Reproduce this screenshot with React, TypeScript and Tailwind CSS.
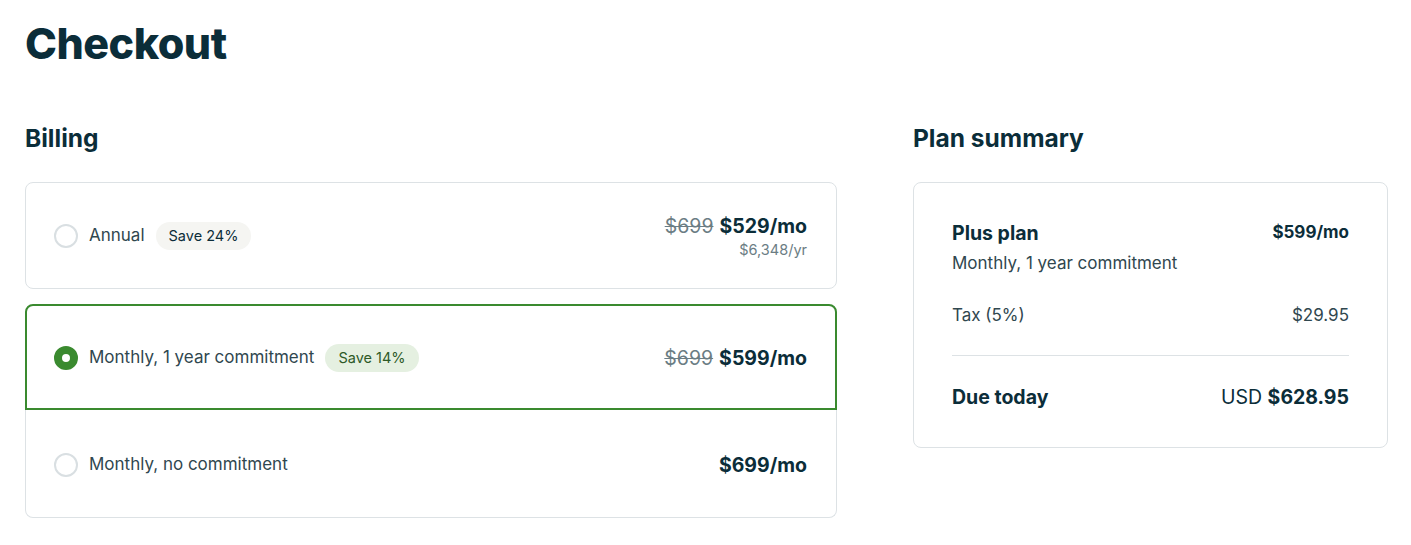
import React from "react";

const ink = "text-[#0b2d39]";

function Radio({ checked }: { checked?: boolean }) {
  if (checked) {
    return (
      <span className="h-6 w-6 shrink-0 rounded-full border-[8px] border-[#3a8a2f] bg-white" />
    );
  }
  return (
    <span className="h-6 w-6 shrink-0 rounded-full border-2 border-[#d9dfe2] bg-white" />
  );
}

function Badge({ children, green }: { children: React.ReactNode; green?: boolean }) {
  return (
    <span
      className={
        green
          ? "rounded-full bg-[#e5f0e1] px-[13px] py-1 text-[14.5px] leading-5 text-[#2d5a27]"
          : "rounded-full bg-[#f5f5f2] px-[13px] py-1 text-[14.5px] leading-5 text-[#0b2d39]"
      }
    >
      {children}
    </span>
  );
}

function Price({ was, now }: { was?: string; now: string }) {
  return (
    <div className="flex items-baseline gap-[6px] text-[19.5px] leading-7">
      {was && <span className="text-[#6b7d84] line-through">{was}</span>}
      <span className={`font-bold ${ink}`}>{now}</span>
    </div>
  );
}

export default function App() {
  return (
    <main
      className="min-h-screen bg-white pl-[25px] pt-[18px]"
      style={{ fontFamily: "Inter, 'Noto Sans', sans-serif" }}
    >
      <h1 className={`text-[43px] font-extrabold leading-[50px] tracking-[-0.5px] ${ink}`}>
        Checkout
      </h1>

      <div className="mt-[54px] flex gap-[76px]">
        {/* Billing */}
        <section className="w-[812px] shrink-0">
          <h2 className={`text-[24.5px] font-bold leading-8 ${ink}`}>Billing</h2>

          <div className="mt-7 flex flex-col gap-[15px]">
            <div className="flex h-[107px] items-center justify-between rounded-lg border border-[#dde2e5] pl-7 pr-[29px] pt-px">
              <div className="flex items-center gap-[11px]">
                <Radio />
                <span className="text-[17px] text-[#30474f]">Annual</span>
                <Badge>Save 24%</Badge>
              </div>
              <div className="flex flex-col items-end">
                <Price was="$699" now="$529/mo" />
                <span className="text-[14.5px] leading-5 text-[#6b7d84]">$6,348/yr</span>
              </div>
            </div>

            <div className="flex flex-col">
              <div className="flex h-[106px] items-center justify-between rounded-t-lg border-2 border-[#3a8a2f] pl-[27px] pr-[28px] pt-[2px]">
                <div className="flex items-center gap-[11px]">
                  <Radio checked />
                  <span className="text-[17px] text-[#30474f]">Monthly, 1 year commitment</span>
                  <Badge green>Save 14%</Badge>
                </div>
                <Price was="$699" now="$599/mo" />
              </div>
              <div className="flex h-[108px] items-center justify-between rounded-b-lg border border-t-0 border-[#dde2e5] pl-7 pr-[29px] pt-[3px]">
                <div className="flex items-center gap-[11px]">
                  <Radio />
                  <span className="text-[17px] text-[#30474f]">Monthly, no commitment</span>
                </div>
                <Price now="$699/mo" />
              </div>
            </div>
          </div>
        </section>

        {/* Plan summary */}
        <section className="w-[475px] shrink-0">
          <h2 className={`text-[24.5px] font-bold leading-8 ${ink}`}>Plan summary</h2>

          <div className="mt-7 rounded-lg border border-[#dde2e5] px-[38px] py-9">
            <div className="flex items-center justify-between">
              <span className={`text-[19.5px] font-bold leading-7 ${ink}`}>Plus plan</span>
              <span className={`text-[17px] font-bold ${ink}`}>$599/mo</span>
            </div>
            <p className="mt-1 text-[17px] leading-6 text-[#30474f]">Monthly, 1 year commitment</p>

            <div className="mt-7 flex items-center justify-between border-b border-[#dde2e5] pb-7 text-[17px] leading-6 text-[#30474f]">
              <span>Tax (5%)</span>
              <span>$29.95</span>
            </div>

            <div className="mt-[27px] flex items-center justify-between">
              <span className={`text-[19.5px] font-bold leading-7 ${ink}`}>Due today</span>
              <span className={`text-[19.5px] leading-7 ${ink}`}>
                USD <span className="font-bold">$628.95</span>
              </span>
            </div>
          </div>
        </section>
      </div>
    </main>
  );
}
